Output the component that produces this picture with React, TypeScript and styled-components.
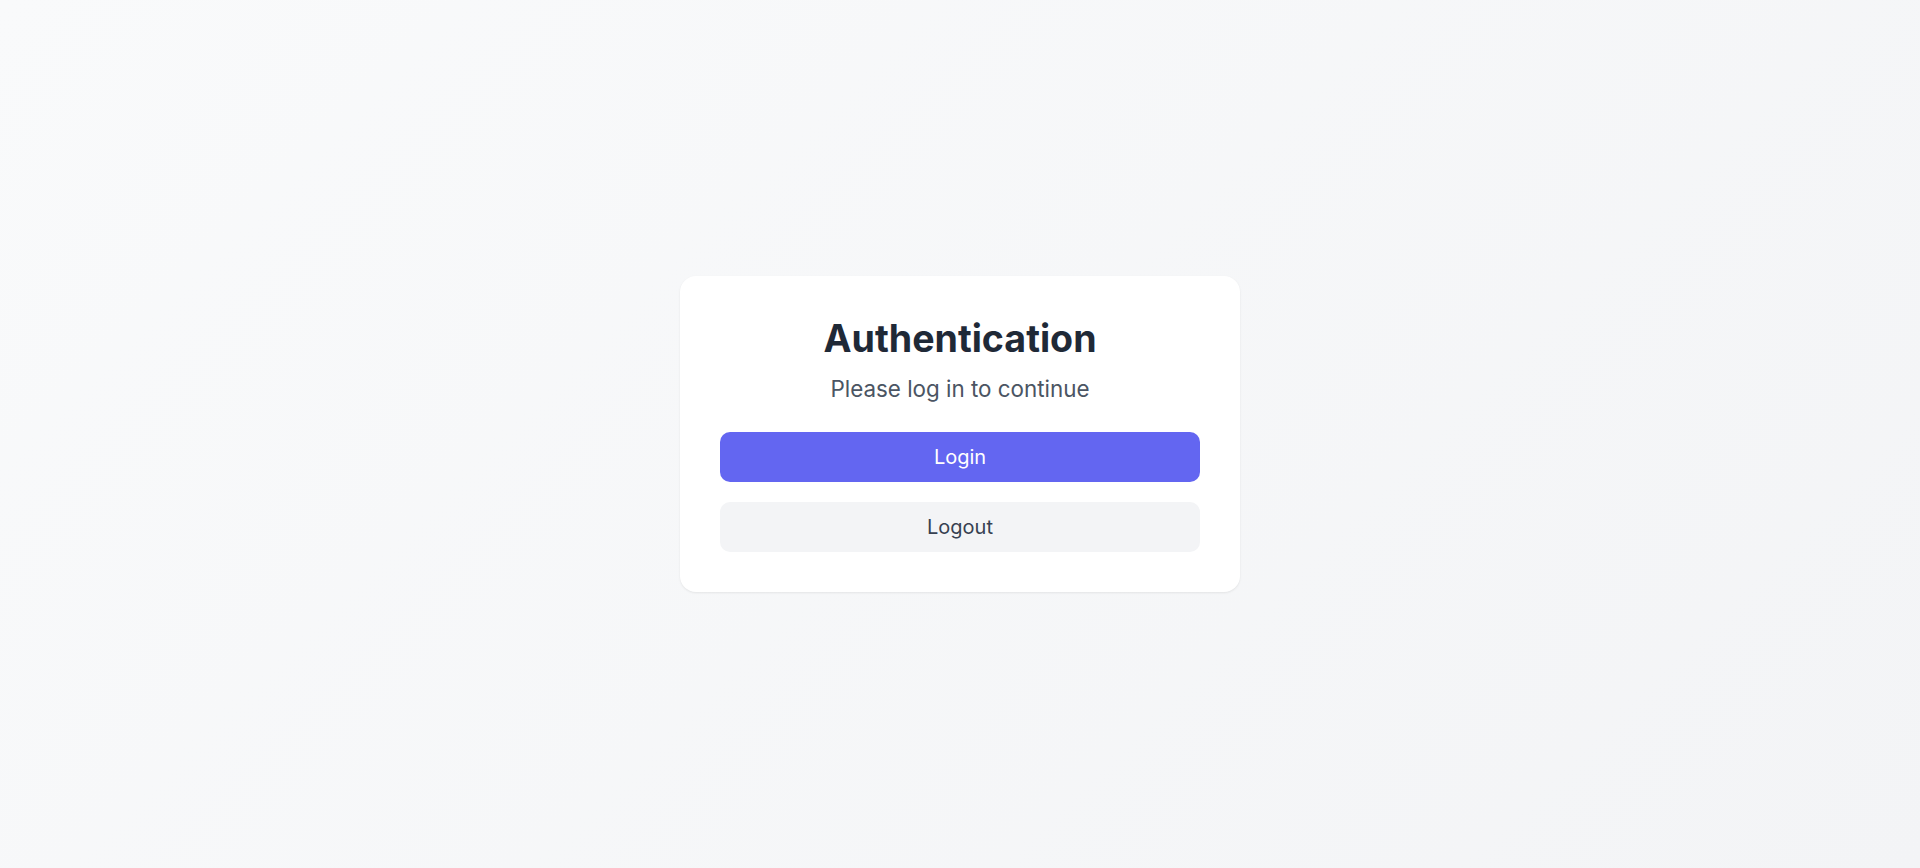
import React from "react";
import styled, { createGlobalStyle } from "styled-components";

const GlobalStyle = createGlobalStyle`
  * { box-sizing: border-box; }
  html, body { margin: 0; padding: 0; }
  body {
    font-family: Inter, "Noto Sans", sans-serif;
    -webkit-font-smoothing: antialiased;
  }
`;

const Page = styled.main`
  min-height: 100vh;
  display: flex;
  align-items: center;
  justify-content: center;
  background: linear-gradient(135deg, #f9fafb 0%, #f3f4f6 100%);
`;

const Card = styled.section`
  width: 560px;
  padding: 40px;
  background: #ffffff;
  border-radius: 16px;
  box-shadow: 0 1px 3px rgba(0, 0, 0, 0.05), 0 1px 2px rgba(0, 0, 0, 0.03);
  display: flex;
  flex-direction: column;
  align-items: stretch;
  text-align: center;
`;

const Title = styled.h1`
  margin: 0 0 10px;
  font-size: 37.6px;
  line-height: 46px;
  font-weight: 700;
  color: #1f2937;
`;

const Subtitle = styled.p`
  margin: 0 0 26px;
  font-size: 22.4px;
  line-height: 1.5;
  color: #4b5563;
`;

const Actions = styled.div`
  display: flex;
  flex-direction: column;
  gap: 20px;
`;

const Button = styled.button<{ $variant: "primary" | "secondary" }>`
  height: 50px;
  border: none;
  border-radius: 10px;
  font-family: inherit;
  font-size: 20px;
  cursor: pointer;
  background: ${(p) => (p.$variant === "primary" ? "#6366f1" : "#f3f4f6")};
  color: ${(p) => (p.$variant === "primary" ? "#ffffff" : "#374151")};
`;

export default function App() {
  return (
    <>
      <GlobalStyle />
      <Page>
        <Card>
          <Title>Authentication</Title>
          <Subtitle>Please log in to continue</Subtitle>
          <Actions>
            <Button $variant="primary">Login</Button>
            <Button $variant="secondary">Logout</Button>
          </Actions>
        </Card>
      </Page>
    </>
  );
}
